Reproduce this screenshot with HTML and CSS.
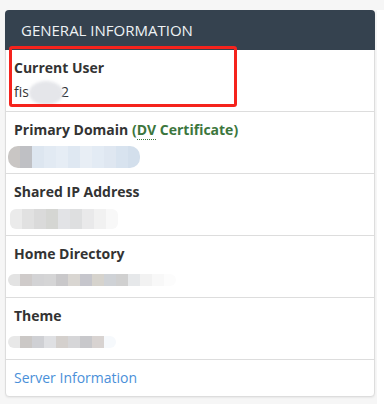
FILE: index.html
```html
<!DOCTYPE html>
<html>
<head>
<meta charset="utf-8">
<link rel="stylesheet" href="styles.css">
</head>
<body>
<div class="page">
  <div class="card">
    <div class="card-header">General Information</div>
    <div class="row">
      <div class="label">Current User</div>
      <div class="value">fis<span class="blot blot-user"></span>2</div>
    </div>
    <div class="row">
      <div class="label">Primary Domain <span class="cert">(<abbr>DV</abbr> Certificate)</span></div>
      <div class="value"><span class="mosaic m-domain"><i></i><i></i><i></i><i></i><i></i><i></i><i></i><i></i><i></i><i></i><i></i></span></div>
    </div>
    <div class="row">
      <div class="label">Shared IP Address</div>
      <div class="value"><span class="mosaic m-ip"><i></i><i></i><i></i><i></i><i></i><i></i><i></i><i></i><i></i></span></div>
    </div>
    <div class="row">
      <div class="label">Home Directory</div>
      <div class="value"><span class="mosaic m-home"><i></i><i></i><i></i><i></i><i></i><i></i><i></i><i></i><i></i><i></i><i></i><i></i><i></i><i></i></span></div>
    </div>
    <div class="row">
      <div class="label">Theme</div>
      <div class="value"><span class="mosaic m-theme"><i></i><i></i><i></i><i></i><i></i><i></i><i></i><i></i><i></i></span></div>
    </div>
    <div class="card-footer"><a href="#">Server Information</a></div>
    <div class="highlight"></div>
  </div>
  <div class="strip"></div>
</div>
</body>
</html>
```

FILE: styles.css
```css
html, body {
  margin: 0;
  padding: 0;
  background: #f6f6f6;
}
body {
  font-family: "Open Sans", "Noto Sans", sans-serif;
  font-size: 14px;
  color: #333;
}
.page {
  display: flex;
  align-items: flex-start;
  padding: 10px 0 0 5px;
  gap: 2px;
}
.card {
  position: relative;
  width: 368px;
  background: #fff;
  border: 1px solid #dddddd;
  border-radius: 4px;
  box-shadow: 0 1px 2px rgba(0,0,0,0.06);
}
.card-header {
  height: 40px;
  box-sizing: border-box;
  padding: 10px 16px 0;
  margin: -1px -1px 0;
  background: #35424f;
  color: #eef2f5;
  text-transform: uppercase;
  font-size: 15px;
  line-height: 20px;
  border-radius: 4px 4px 0 0;
}
.row {
  height: 62px;
  box-sizing: border-box;
  padding: 8px 8px 0;
  border-bottom: 1px solid #dddddd;
}
.row:first-of-type {
  height: 61px;
}
.label {
  font-weight: 700;
  line-height: 20px;
  color: #333;
}
.cert {
  color: #3c763d;
}
.cert abbr {
  text-decoration: none;
  border-bottom: 1px dotted #3c763d;
}
.value {
  margin-top: 4px;
  line-height: 20px;
  height: 20px;
  display: flex;
  align-items: center;
}
.blot {
  display: inline-block;
  background: #e3e3e6;
  filter: blur(1.5px);
}
.blot-user {
  width: 34px;
  height: 24px;
  border-radius: 50%;
  margin: 2px -2px 0 0;
  background: #e5e6ea;
}
.mosaic {
  display: inline-flex;
  height: 12px;
  border-radius: 6px;
  overflow: hidden;
  filter: blur(0.6px);
}
.mosaic i {
  display: block;
  width: 12px;
  height: 100%;
}
.m-domain { margin-left: -6px; margin-top: 6px; height: 22px; border-radius: 10px; }
.m-domain i:nth-child(1) { background: #c9c6c4; }
.m-domain i:nth-child(2) { background: #bfc0c4; }
.m-domain i:nth-child(3) { background: #dde6f0; }
.m-domain i:nth-child(4) { background: #e2eaf3; }
.m-domain i:nth-child(5) { background: #e6edf5; }
.m-domain i:nth-child(6) { background: #dfe8f2; }
.m-domain i:nth-child(7) { background: #e8eef5; }
.m-domain i:nth-child(8) { background: #e3ebf4; }
.m-domain i:nth-child(9) { background: #dfe7f1; }
.m-domain i:nth-child(10) { background: #d8e3ef; }
.m-domain i:nth-child(11) { background: #d3dfec; }
.m-ip { margin-left: -4px; margin-top: 6px; height: 20px; }
.m-ip i:nth-child(1) { background: #ebebeb; }
.m-ip i:nth-child(2) { background: #e1e1e1; }
.m-ip i:nth-child(3) { background: #dadada; }
.m-ip i:nth-child(4) { background: #d5d6d3; }
.m-ip i:nth-child(5) { background: #e2e3e6; }
.m-ip i:nth-child(6) { background: #dedfe0; }
.m-ip i:nth-child(7) { background: #e9e9ea; }
.m-ip i:nth-child(8) { background: #f1f1f1; }
.m-ip i:nth-child(9) { background: #f8f8f8; }
.m-home { margin-left: -6px; margin-top: 4px; }
.m-home i:nth-child(1) { background: #e3e3e3; }
.m-home i:nth-child(2) { background: #cfcbca; }
.m-home i:nth-child(3) { background: #d3d3d5; }
.m-home i:nth-child(4) { background: #d5d5d6; }
.m-home i:nth-child(5) { background: #c9c8ca; }
.m-home i:nth-child(6) { background: #d9d6d2; }
.m-home i:nth-child(7) { background: #c6c6cc; }
.m-home i:nth-child(8) { background: #d6d3cd; }
.m-home i:nth-child(9) { background: #cfd2d6; }
.m-home i:nth-child(10) { background: #d0d0d0; }
.m-home i:nth-child(11) { background: #e6e8ea; }
.m-home i:nth-child(12) { background: #f2f2f2; }
.m-home i:nth-child(13) { background: #f8f8f8; }
.m-home i:nth-child(14) { background: #fcfcfc; }
.m-theme { margin-left: -6px; margin-top: 4px; }
.m-theme i:nth-child(1) { background: #e8e8e8; }
.m-theme i:nth-child(2) { background: #cbc8c6; }
.m-theme i:nth-child(3) { background: #cfd0d4; }
.m-theme i:nth-child(4) { background: #dfe0e3; }
.m-theme i:nth-child(5) { background: #d4d0cd; }
.m-theme i:nth-child(6) { background: #d6d6d8; }
.m-theme i:nth-child(7) { background: #c8c8cb; }
.m-theme i:nth-child(8) { background: #d8d3d1; }
.m-theme i:nth-child(9) { background: #f6f9fc; }
.card-footer {
  height: 36px;
  box-sizing: border-box;
  padding: 8px 8px 0;
  line-height: 20px;
}
.card-footer a {
  color: #4a90d9;
  text-decoration: none;
}
.highlight {
  position: absolute;
  left: 3px;
  top: 35px;
  width: 222px;
  height: 55px;
  border: 3px solid #f5231d;
  border-radius: 3px;
}
.strip {
  width: 7px;
  height: 394px;
  background: #ffffff;
}
```
